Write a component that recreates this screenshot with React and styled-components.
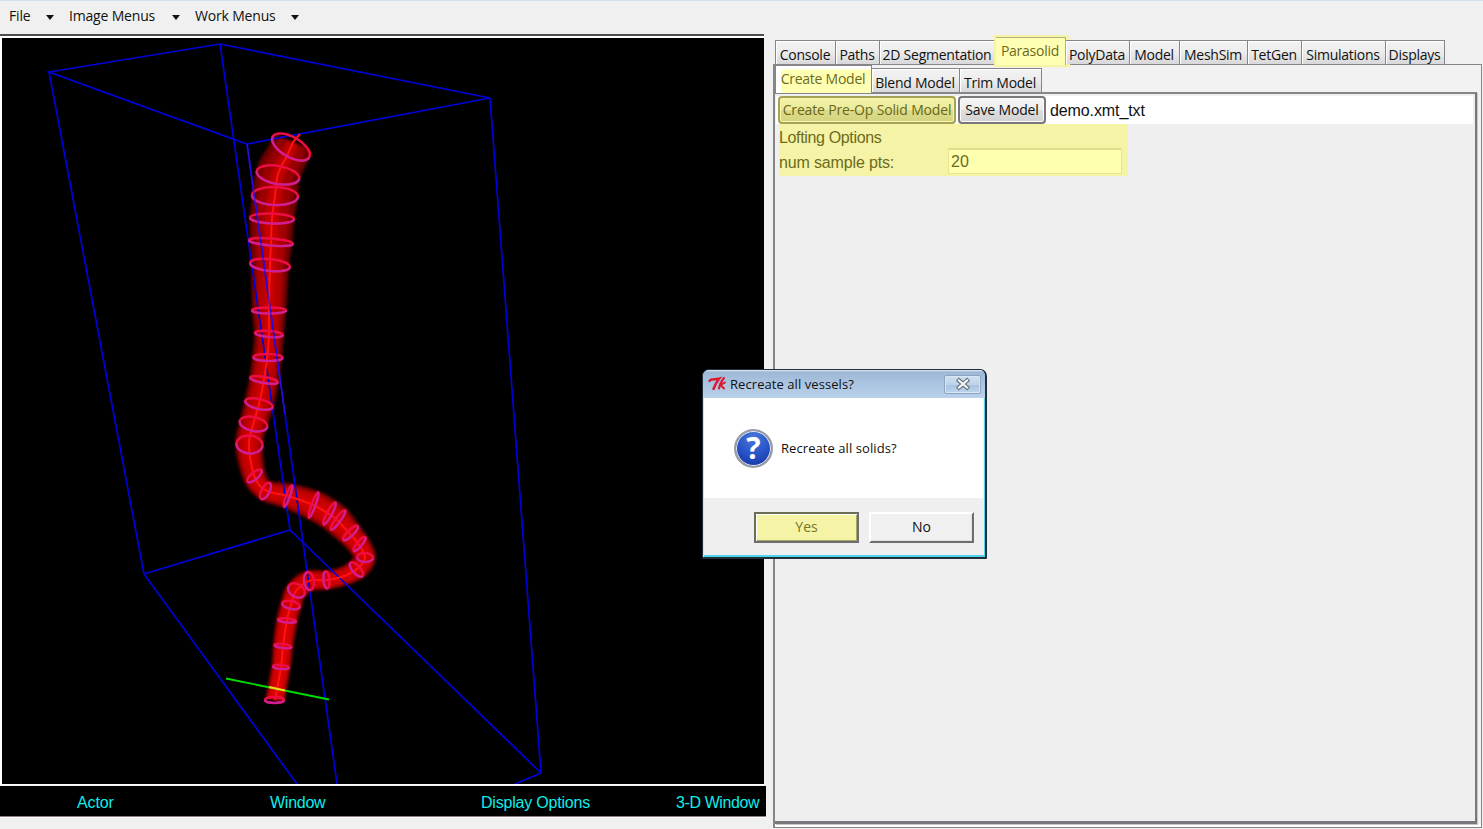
import React from "react";
import styled, { createGlobalStyle, css } from "styled-components";

const UI = `"Open Sans", "Noto Sans", sans-serif`;
const ARIAL = `"Liberation Sans", Arial, sans-serif`;

const Global = createGlobalStyle`
  * { box-sizing: border-box; }
  body { margin: 0; background: #f0f0f0; color: #111; overflow: hidden; }
  button, input { margin: 0; padding: 0; font: inherit; color: inherit; }
`;

const Page = styled.div`
  width: 1483px;
  height: 829px;
  display: flex;
  flex-direction: column;
  background: #f0f0f0;
  font: 14px/18px ${UI};
`;

const MenuBar = styled.nav`
  height: 34px;
  flex: none;
  display: flex;
  align-items: center;
  padding: 0 0 3px 9px;
  border-top: 1px solid #d4e0ee;
`;

const MenuItem = styled.div`
  width: ${(p) => p.$width}px;
  display: flex;
  align-items: center;
  justify-content: space-between;
  margin-right: 15px;
  letter-spacing: -0.18px;
  white-space: nowrap;
`;

const Arrow = styled.i`
  border: 4.5px solid transparent;
  border-top: 5px solid #111;
  border-bottom: 0;
  margin-top: 2px;
`;

const Body = styled.main`
  flex: 1;
  display: flex;
  min-height: 0;
`;

const Left = styled.section`
  width: 766px;
  display: flex;
  flex-direction: column;
`;

const ViewFrame = styled.div`
  width: 764px;
  height: 751px;
  padding: 2px 0 1px 2px;
  margin-bottom: 1px;
  border-top: 2px solid #4c4c4c;
  background: #fff;
`;

const Scene = styled.svg`
  display: block;
  width: 762px;
  height: 746px;
  background: #000;
`;

const StatusBar = styled.div`
  height: 31px;
  background: #000;
  border-bottom: 1px solid #8c8080;
  color: #10ecea;
  font: 16px/33px ${ARIAL};
  display: grid;
  grid-template-columns: 193px 211px 195px 1fr;
  padding-left: 77px;
  white-space: nowrap;
  box-shadow: 0 1px 0 #fff;
`;

const StatusItem = styled.span`
  letter-spacing: ${(p) => p.$spacing}px;
`;

const Right = styled.section`
  width: 709px;
  margin: 5px 0 1px 7px;
  display: flex;
  flex-direction: column;
`;

const TabStrip = styled.div`
  display: flex;
  align-items: flex-end;
  height: ${(p) => p.$height}px;
  padding-left: ${(p) => p.$left}px;
  position: relative;
  z-index: 1;
`;

const Tab = styled.button`
  width: ${(p) => p.$width}px;
  height: 24px;
  border: 1px solid #85858a;
  border-width: 1px 1px 0 0;
  box-shadow: inset 1px 1px 0 #fff;
  background: linear-gradient(#f3f3f3 0%, #ececec 50%, #d8d8da 100%);
  white-space: nowrap;
  display: flex;
  justify-content: center;
  align-items: center;
  padding: 4px 1px 0 0;
  letter-spacing: -0.25px;
  &:first-child { border-left-width: 1px; }
  ${(p) => p.$active && css`
    height: 28px;
    padding: 0 1px 1px 0;
    margin-bottom: -1px;
    color: #6c6b1c;
    background: ${p.$inner
      ? "linear-gradient(90deg, #fff 5px, transparent 5px), linear-gradient(#fff 3px, #ffffb4 4px)"
      : "#ffffb4"};
    border-color: ${p.$inner ? "#85858a" : "#b4b27c"};
    box-shadow: ${p.$inner ? "none" : "0 0 0 2px #f5f4a6, 3px 1px 1px 1px #f5f4a6"};
  `}
`;

const Panel = styled.div`
  flex: 1;
  border: 1px solid #85858a;
  border-left-width: 2px;
  padding: 2px 4px 3px 0;
  display: flex;
  flex-direction: column;
  background: linear-gradient(#fff, #fff) bottom / 100% 3px no-repeat, #f2f2f2;
`;

const InnerPanel = styled.div`
  flex: 1;
  border-top: 2px solid #85858a;
  border-right: 2px solid #77777c;
  border-bottom: 3px solid #77777c;
  background: #efefef;
  box-shadow: 1px 1px 0 #c8c8cc;
  padding: 2px 2px 0 1px;
`;

const ToolRow = styled.div`
  display: flex;
  height: 28px;
  background: #fff;
  padding-left: 2px;
  gap: 2px;
  font: 16px/27px ${ARIAL};
`;

const ToolButton = styled.button`
  width: ${(p) => p.$width}px;
  height: 28px;
  font: 14px/18px ${UI};
  border: 2px solid ${(p) => (p.$lit ? "#a5a253" : "#77777c")};
  border-radius: 4px;
  color: ${(p) => (p.$lit ? "#68671a" : "#111")};
  background: ${(p) => p.$lit
    ? "linear-gradient(#f3f3a5, #ebea9c 50%, #dcdb87 51%, #d5d482)"
    : "linear-gradient(#f6f6f6, #ececec 50%, #dedede 51%, #d2d2d4)"};
  box-shadow: inset 0 0 0 1px ${(p) => (p.$lit ? "#f7f6ae" : "#fafafa")};
  white-space: nowrap;
  letter-spacing: -0.16px;
`;

const FileInput = styled.input`
  flex: 1;
  min-width: 0;
  border: 0;
  padding-left: 2px;
  background: #fff;
  letter-spacing: -0.1px;
`;

const Options = styled.div`
  width: 349px;
  height: 52px;
  margin-left: 3px;
  padding: 1px 6px 0 0;
  background: #f5f4a6;
  color: #6c6b1c;
  font: 16px/25px ${ARIAL};
  letter-spacing: -0.15px;
`;

const OptionLine = styled.div`
  display: flex;
  justify-content: space-between;
  height: 25px;
  letter-spacing: ${(p) => p.$spacing}px;
`;

const NumberInput = styled.input`
  width: 174px;
  height: 26px;
  margin-top: -2px;
  border: 1px solid #e6e592;
  border-top: 2px solid #dfde8b;
  background: #ffffb0;
  padding: 1px 0 0 2px;
`;

const Dialog = styled.div`
  position: absolute;
  left: 702px;
  top: 369px;
  width: 285px;
  height: 190px;
  display: flex;
  flex-direction: column;
  border: 1px solid #20303a;
  border-radius: 7px 7px 1px 1px;
  border-right-width: 2px;
  border-bottom-width: 2px;
  overflow: hidden;
  background: #efefef;
  font: 13px/18px ${UI};
  letter-spacing: 0.07px;
  box-shadow: inset 1px 0 0 #bfeaf5, inset -1px -1px 0 #4fd3ee, inset 0 -2px 0 #4fd3ee;
`;

const TitleBar = styled.div`
  height: 28px;
  flex: none;
  display: flex;
  align-items: center;
  padding: 0 4px 0 5px;
  background: linear-gradient(#e4edf7 0, #9db7d5 2px, #a9c3e0 45%, #bad1ea 100%);
`;

const Title = styled.span`
  flex: 1;
  margin-left: 3px;
`;

const CloseButton = styled.button`
  width: 37px;
  height: 19px;
  border: 1px solid #8ba5c2;
  border-radius: 2px;
  background: linear-gradient(#cfe0f1, #bdd3ea 50%, #a9c3df 51%, #bdd4ec);
  box-shadow: inset 0 0 0 1px #d8e6f4;
  display: grid;
  place-items: center;
`;

const Message = styled.div`
  height: 100px;
  margin: 0 2px 0 1px;
  display: flex;
  align-items: center;
  gap: 8px;
  padding-left: 30px;
  background: #fff;
`;

const Actions = styled.div`
  display: flex;
  gap: 10px;
  padding: 14px 0 0 51px;
`;

const DialogButton = styled.button`
  width: 105px;
  height: 31px;
  font: 14px/18px ${UI};
  padding-bottom: 1px;
  border: ${(p) => (p.$primary ? "2px solid #6d6c55" : "2px solid #fff")};
  border-right-color: #6e6e6e;
  border-bottom-color: #6e6e6e;
  color: ${(p) => (p.$primary ? "#77761f" : "#111")};
  background: ${(p) => (p.$primary ? "#f5f4a6" : "#f0f0f0")};
  box-shadow: ${(p) => (p.$primary
    ? "inset 1px 1px 0 #fff, inset -1px -1px 0 #a5a46b" : "inset -1px -1px 0 #e0e0e0")};
`;

/* centre line of the vessel: x, y, radius */
const SPINE = [
  [293,142,19],[287,156,20],[278,174,21],[275,196,21.5],[272,219,21],[271,243,20],[270,266,18],
  [269,310,16],[269,335,14],[267,358,14],[264,380,14],[259,404,14],[253,425,13],
  [249,445,13],[254,475,11],[265,490,10],[288,496,12],[313,505,14],[329,514,14],
  [338,521,14],[350,534,12],[359,545,11],[365,558,10],[357,569,10],[344,576,9],[327,580,9],
  [309,581,10],[296,591,10],[291,605,10],[287,620,10],[283,646,9.5],[281,667,9],[275,700,9],
];

/* cross sections: cx, cy, rx, ry, angle */
const RINGS = [
  [291,147,21,10,30],[278,175,21.5,9,10],[275,196,23,9,2],[272,218.5,22,5,2],
  [271,242,22,3.5,5],[270,265,20,6,6],[269,310.5,17,3,0],[269,334,14,3,5],
  [268,357.5,14.5,3.5,1],[264,380,14,3,10],[259,404,14,5,13],[253.5,424,14,7,12],
  [249.5,444.5,13,9,5],[254.5,476,9,3.5,-40],[265.5,491,9,4,-62],[288,496,11.5,2,-70],
  [313.5,505,13.5,2,-70],[329.5,513.5,12.5,2.5,-62],[338,520,12,2.5,-54],
  [350.5,533,10,3,-44],[359.5,544,9,2.5,-50],[365,557.5,8,4.5,3],[356.5,569.5,9,4,48],
  [326.5,580,8.5,3,85],[309,581,9,5,82],[296.5,590.5,9,6.5,30],[291,605,9,4,12],
  [287,620.5,9,2,6],[283,646,8.5,2,8],[281,667,8,2,5],[274.5,700,9.5,3,0],
];

const BOX_EDGES =
  "M49 72L220 44L490 98L247 144ZM49 72L144 574L297 784M220 44L290 530M490 98L541 773L515 784M247 144L337 784M144 574L290 530L541 773";

function smooth(points) {
  const out = [];
  for (let i = 0; i < points.length - 1; i++) {
    const a = points[Math.max(0, i - 1)], b = points[i], c = points[i + 1];
    const d = points[Math.min(points.length - 1, i + 2)];
    for (let s = 0; s < 6; s++) {
      const t = s / 6;
      out.push(b.map((_, k) => 0.5 * (2 * b[k] + (c[k] - a[k]) * t +
        (2 * a[k] - 5 * b[k] + 4 * c[k] - d[k]) * t * t +
        (3 * b[k] - a[k] - 3 * c[k] + d[k]) * t * t * t)));
    }
  }
  out.push(points[points.length - 1]);
  return out;
}

const CURVE = smooth(SPINE);

function tube(scale) {
  const left = [], right = [];
  CURVE.forEach(([x, y, r], i) => {
    const p = CURVE[Math.max(0, i - 1)], n = CURVE[Math.min(CURVE.length - 1, i + 1)];
    const dx = n[0] - p[0], dy = n[1] - p[1], l = Math.hypot(dx, dy) || 1;
    const ox = (-dy / l) * r * scale, oy = (dx / l) * r * scale;
    left.push(`${(x + ox).toFixed(1)},${(y + oy).toFixed(1)}`);
    right.unshift(`${(x - ox).toFixed(1)},${(y - oy).toFixed(1)}`);
  });
  return [...left, ...right].join(" ");
}

function VesselScene() {
  return (
    <Scene viewBox="2 38 762 746">
      <defs>
        <filter id="soft" x="-20%" y="-5%" width="140%" height="110%">
          <feGaussianBlur stdDeviation="1.6" />
        </filter>
        <linearGradient id="deep" gradientUnits="userSpaceOnUse" x1="0" y1="140" x2="0" y2="700">
          <stop offset="0" stopColor="#6c0000" />
          <stop offset=".5" stopColor="#850000" />
          <stop offset="1" stopColor="#a80000" />
        </linearGradient>
        <linearGradient id="bright" gradientUnits="userSpaceOnUse" x1="0" y1="140" x2="0" y2="700">
          <stop offset="0" stopColor="#900000" />
          <stop offset=".25" stopColor="#b00000" />
          <stop offset="1" stopColor="#d80000" />
        </linearGradient>
      </defs>
      <g filter="url(#soft)">
        <polygon points={tube(1.05)} fill="url(#deep)" />
        <polygon points={tube(0.74)} fill="url(#bright)" />
        <polygon points={tube(0.32)} fill="#e00000" opacity=".55" />
      </g>
      <path d={BOX_EDGES} fill="none" stroke="#0000d8" strokeWidth="1.7" />
      <path d={"M300 134L" + CURVE.map((p) => `${p[0].toFixed(1)} ${p[1].toFixed(1)}`).join("L")}
        fill="none" stroke="#ff1212" strokeWidth="2" />
      {RINGS.map(([x, y, rx, ry, a], i) => (
        <g key={i} transform={`rotate(${a} ${x} ${y})`} fill="none">
          <ellipse cx={x} cy={y} rx={rx} ry={ry} stroke="#ee0c44" strokeWidth="2.5" />
          <path d={`M${x - rx} ${y}A${rx} ${ry} 0 0 0 ${x + rx} ${y}`} stroke="#cc2098" strokeWidth="2.2" />
        </g>
      ))}
      <path d="M247 144L285 414" fill="none" stroke="#3a10d8" strokeWidth="1.6" opacity=".75" />
      <path d="M226 678.5L329 699.5" stroke="#00dc00" strokeWidth="1.8" />
      <path d="M269 687L285 690.5" stroke="#ffd020" strokeWidth="2" />
    </Scene>
  );
}

function TkLogo() {
  return (
    <svg width="19" height="16" viewBox="0 0 19 16" fill="none" stroke="#df1830" strokeLinecap="round">
      <path d="M1.5 5C3 2 7 4 11 2.7C8.5 6 7 9 5.5 13" strokeWidth="2.4" />
      <path d="M16 2C13.5 5 11.5 9 11 12.5M17 6.5L12.5 9L16 12.5" strokeWidth="2" />
    </svg>
  );
}

const QuestionBadge = styled.span`
  width: 39px;
  height: 39px;
  border-radius: 50%;
  border: 2px solid #9b9da4;
  box-shadow: inset 0 0 0 1px #e8ebf2;
  background: radial-gradient(circle at 50% 20%, #4a78dd, #2650c4 55%, #14309a);
  color: #fff;
  font: bold 30px/34px ${UI};
  text-align: center;
`;

function CloseGlyph() {
  return (
    <svg width="16" height="14" viewBox="0 0 16 14" strokeLinecap="square">
      <path d="M4 3.5L12 10.5M12 3.5L4 10.5" stroke="#6b747e" strokeWidth="4.4" />
      <path d="M4 3.5L12 10.5M12 3.5L4 10.5" stroke="#f4f6f8" strokeWidth="2.2" />
    </svg>
  );
}

const MENUS = [["File", 45], ["Image Menus", 111], ["Work Menus", 104]];
const TABS = [
  ["Console", 61], ["Paths", 44], ["2D Segmentation", 116], ["Parasolid", 70],
  ["PolyData", 64], ["Model", 50], ["MeshSim", 68], ["TetGen", 54],
  ["Simulations", 84], ["Displays", 59],
];

export default function App() {
  return (
    <>
      <Global />
      <Page>
        <MenuBar>
          {MENUS.map(([name, width]) => (
            <MenuItem key={name} $width={width}>{name}<Arrow /></MenuItem>
          ))}
        </MenuBar>
        <Body>
          <Left>
            <ViewFrame><VesselScene /></ViewFrame>
            <StatusBar>
              <StatusItem $spacing={-0.1}>Actor</StatusItem>
              <StatusItem $spacing={-0.25}>Window</StatusItem>
              <StatusItem $spacing={-0.2}>Display Options</StatusItem>
              <StatusItem $spacing={-0.4}>3-D Window</StatusItem>
            </StatusBar>
          </Left>
          <Right>
            <TabStrip $height={25} $left={2}>
              {TABS.map(([name, width]) => (
                <Tab key={name} $width={width} $active={name === "Parasolid"}>{name}</Tab>
              ))}
            </TabStrip>
            <Panel>
              <TabStrip $height={25} $left={0}>
                <Tab $width={97} $active $inner>Create Model</Tab>
                <Tab $width={88}>Blend Model</Tab>
                <Tab $width={82}>Trim Model</Tab>
              </TabStrip>
              <InnerPanel>
                <ToolRow>
                  <ToolButton $width={178} $lit>Create Pre-Op Solid Model</ToolButton>
                  <ToolButton $width={88}>Save Model</ToolButton>
                  <FileInput defaultValue="demo.xmt_txt" />
                </ToolRow>
                <Options>
                  <OptionLine $spacing={-0.35}>Lofting Options</OptionLine>
                  <OptionLine $spacing={-0.15}>num sample pts:<NumberInput defaultValue="20" /></OptionLine>
                </Options>
              </InnerPanel>
            </Panel>
          </Right>
        </Body>
      </Page>
      <Dialog>
        <TitleBar>
          <TkLogo />
          <Title>Recreate all vessels?</Title>
          <CloseButton><CloseGlyph /></CloseButton>
        </TitleBar>
        <Message><QuestionBadge>?</QuestionBadge>Recreate all solids?</Message>
        <Actions>
          <DialogButton $primary>Yes</DialogButton>
          <DialogButton>No</DialogButton>
        </Actions>
      </Dialog>
    </>
  );
}
